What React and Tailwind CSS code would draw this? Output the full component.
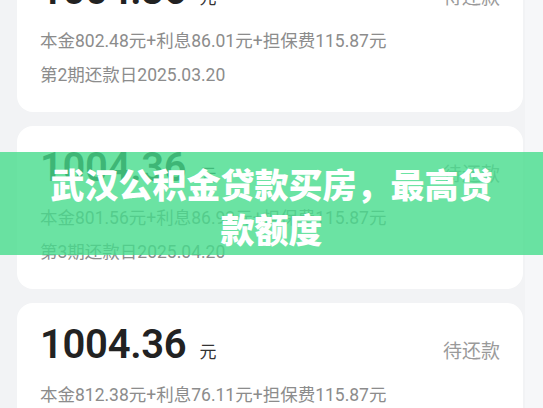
import React from 'react'

const bills = [
  { amount: '1004.36', principal: '802.48', interest: '86.01', fee: '115.87', term: 2, date: '2025.03.20' },
  { amount: '1004.36', principal: '801.56', interest: '86.93', fee: '115.87', term: 3, date: '2025.04.20' },
  { amount: '1004.36', principal: '812.38', interest: '76.11', fee: '115.87', term: 4, date: '2025.05.20' },
]

const BillCard = ({ bill }) => (
  <div className="h-[163px] shrink-0 rounded-[16px] bg-white px-[23px] pt-[19px]">
    <div className="flex items-baseline justify-between leading-[46px]">
      <div className="flex items-baseline gap-[13px]">
        <span className="text-[40px] font-semibold tracking-[-0.3px] text-[#222]" style={{ fontFamily: 'Roboto, "Noto Sans CJK SC", sans-serif' }}>
          {bill.amount}
        </span>
        <span className="text-[17px] text-[#333]">元</span>
      </div>
      <span className="text-[19px] text-[#9a9a9a]">待还款</span>
    </div>
    <div className="mt-[3px] text-[17.5px] leading-[34px] text-[#8c8c8c]">
      <div>本金{bill.principal}元+利息{bill.interest}元+担保费{bill.fee}元</div>
      <div>第{bill.term}期还款日{bill.date}</div>
    </div>
  </div>
)

export default function App() {
  return (
    <div
      className="relative flex h-[408px] w-[543px] overflow-hidden bg-[#f2f3f5]"
      style={{ fontFamily: 'Roboto, "Noto Sans CJK SC", sans-serif' }}
    >
      <div className="-mt-[51px] flex w-[525px] flex-col gap-[14px] pl-[17px] pr-[2px]">
        {bills.map((b, i) => (
          <BillCard key={i} bill={b} />
        ))}
      </div>
      <div className="w-[18px] bg-[#f6f7f9]" />

      <div className="absolute left-0 right-0 top-[152px] h-[103px] bg-[rgba(70,220,140,0.8)] px-[40px] pt-[9px] text-center">
        <h1
          className="text-[34px] font-black leading-[45px] text-white"
          style={{ fontFamily: '"Noto Sans CJK SC", sans-serif' }}
        >
          武汉公积金贷款买房，最高贷款额度
        </h1>
      </div>
    </div>
  )
}
